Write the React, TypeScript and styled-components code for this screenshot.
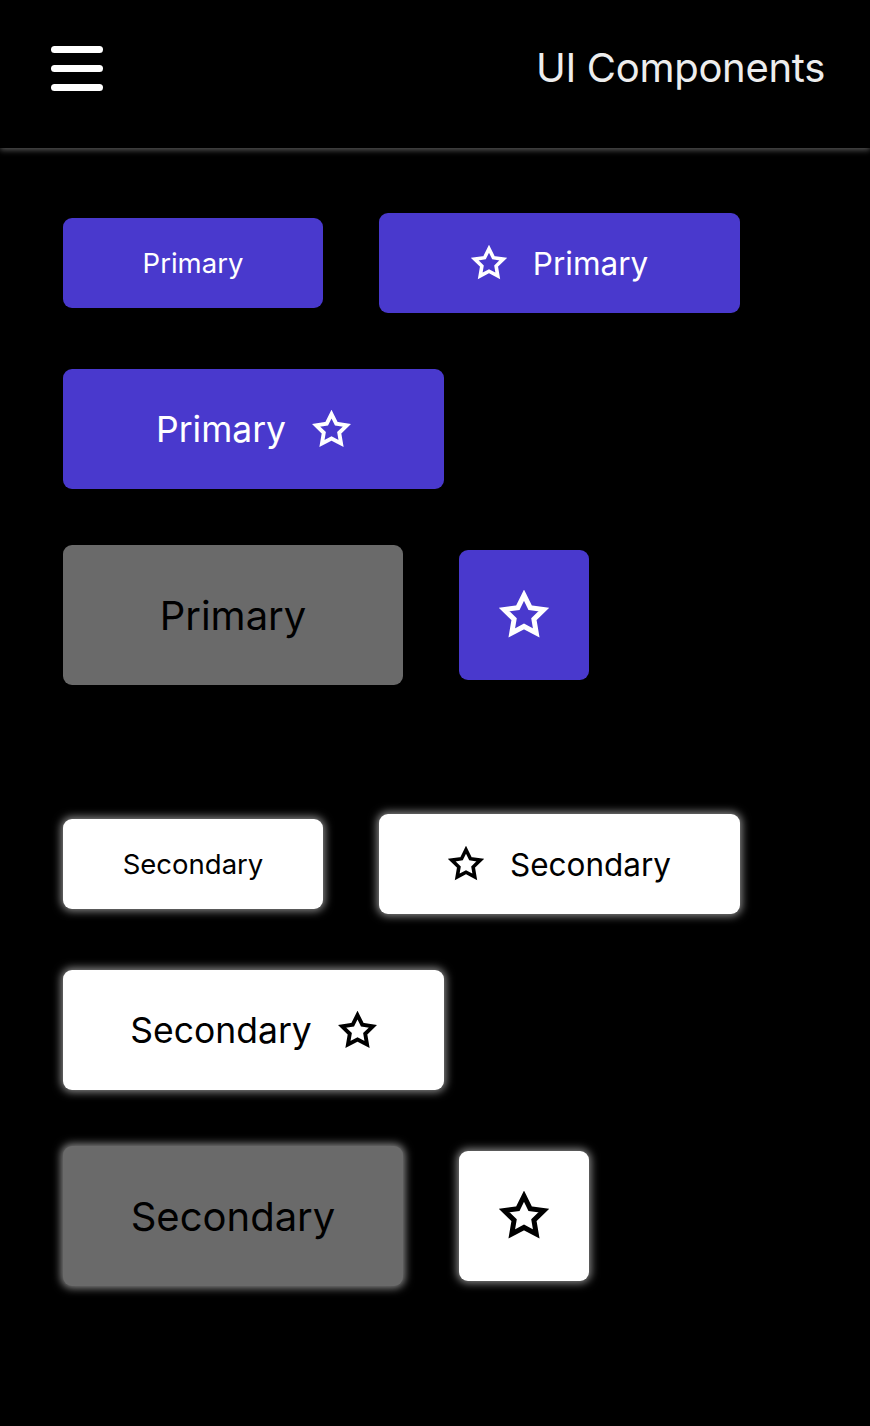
import React from "react";
import styled, { createGlobalStyle, css } from "styled-components";

const Global = createGlobalStyle`
  html, body { margin: 0; padding: 0; background: #000; }
  body { font-family: Inter, "Open Sans", sans-serif; }
  * { box-sizing: border-box; }
`;

const Header = styled.header`
  height: 148px;
  display: flex;
  align-items: center;
  justify-content: space-between;
  padding: 0 45px 14px 51px;
  background: #000;
  box-shadow: 0 2px 6px rgba(255, 255, 255, 0.35);
  position: relative;
`;

const Burger = styled.div`
  width: 52px;
  display: flex;
  flex-direction: column;
  gap: 12px;
  margin-top: 2px;
`;

const BurgerBar = styled.span`
  display: block;
  height: 7px;
  border-radius: 4px;
  background: #fff;
`;

const Title = styled.h1`
  margin: 0;
  font-family: Inter, sans-serif;
  font-weight: 400;
  font-size: 40px;
  color: #ededed;
  letter-spacing: -0.3px;
`;

const Main = styled.main`
  padding: 65px 0 120px 63px;
  display: flex;
  flex-direction: column;
  gap: 129px;
`;

const Section = styled.section`
  display: flex;
  flex-direction: column;
  gap: 56px;
`;

const Row = styled.div`
  display: flex;
  align-items: center;
  gap: 56px;
`;

type Size = "sm" | "md" | "lg" | "xl" | "icon";
type Variant = "primary" | "secondary";

const sizes: Record<Size, { w: number; h: number; f: number }> = {
  sm: { w: 260, h: 90, f: 27.5 },
  md: { w: 361, h: 100, f: 31.5 },
  lg: { w: 381, h: 120, f: 35.5 },
  xl: { w: 340, h: 140, f: 40 },
  icon: { w: 130, h: 130, f: 30 },
};

const Button = styled.button<{ $size: Size; $variant: Variant; $disabled?: boolean }>`
  display: flex;
  align-items: center;
  justify-content: center;
  gap: 26px;
  border: none;
  border-radius: 9px;
  font-family: Inter, sans-serif;
  font-weight: 400;
  padding: 0;
  width: ${(p) => sizes[p.$size].w}px;
  height: ${(p) => sizes[p.$size].h}px;
  font-size: ${(p) => sizes[p.$size].f}px;
  ${(p) =>
    p.$variant === "primary"
      ? css`
          background: #4939cd;
          color: #fff;
        `
      : css`
          background: #fff;
          color: #000;
          box-shadow: 0 0 8px 2px rgba(255, 255, 255, 0.55);
        `}
  ${(p) =>
    p.$disabled &&
    css`
      background: #6a6a6a;
      color: #000;
    `}
`;

const StarSvg = styled.svg<{ $px: number }>`
  width: ${(p) => p.$px}px;
  height: ${(p) => p.$px}px;
  flex: none;
`;

const Star = ({ px }: { px: number }) => (
  <StarSvg $px={px} viewBox="0 0 24 24">
    <polygon
      points="12,2.5 14.94,8.45 21.5,9.4 16.75,14.03 17.87,20.57 12,17.48 6.13,20.57 7.25,14.03 2.5,9.4 9.06,8.45"
      fill="none"
      stroke="currentColor"
      strokeWidth={2.4}
      strokeLinejoin="miter"
    />
  </StarSvg>
);

const Group = ({ variant, label }: { variant: Variant; label: string }) => (
  <Section>
    <Row>
      <Button $variant={variant} $size="sm">{label}</Button>
      <Button $variant={variant} $size="md">
        <Star px={36} />
        {label}
      </Button>
    </Row>
    <Row>
      <Button $variant={variant} $size="lg">
        {label}
        <Star px={39} />
      </Button>
    </Row>
    <Row>
      <Button $variant={variant} $size="xl" $disabled>{label}</Button>
      <Button $variant={variant} $size="icon" aria-label="star">
        <Star px={50} />
      </Button>
    </Row>
  </Section>
);

export default function App() {
  return (
    <>
      <Global />
      <Header>
        <Burger>
          <BurgerBar />
          <BurgerBar />
          <BurgerBar />
        </Burger>
        <Title>UI Components</Title>
      </Header>
      <Main>
        <Group variant="primary" label="Primary" />
        <Group variant="secondary" label="Secondary" />
      </Main>
    </>
  );
}
